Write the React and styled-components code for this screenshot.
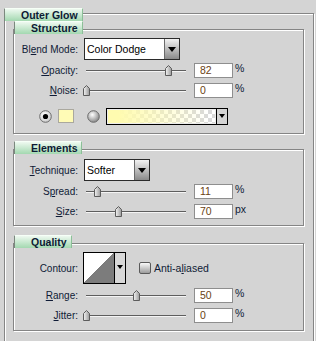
import React from 'react';
import styled, { createGlobalStyle } from 'styled-components';

const GlobalStyle = createGlobalStyle`
  html, body {
    margin: 0;
    padding: 0;
    overflow: hidden;
    background: #d4d4d4;
  }
  body {
    font-family: "Liberation Sans", Arial, sans-serif;
    font-size: 10px;
    color: #0f1b36;
  }
`;

const Page = styled.div`
  width: 316px;
  height: 341px;
  box-sizing: border-box;
  padding: 8px 0 0 4px;
  overflow: hidden;
`;

const Group = styled.section`
  display: flex;
  flex-direction: column;
  margin-top: ${({ $gap }) => $gap || 0}px;
`;

const Tab = styled.div`
  position: relative;
  z-index: 1;
  align-self: flex-start;
  box-sizing: border-box;
  width: ${({ $w }) => $w}px;
  height: 13px;
  margin-left: ${({ $indent }) => $indent || 0}px;
  margin-bottom: ${({ $overlap }) => $overlap}px;
  padding-left: 16px;
  font-size: 10.5px;
  font-weight: bold;
  line-height: 12px;
  color: #0c1a34;
  background: linear-gradient(#eef9f0, #a3d8b0);
  border-top: 1px solid #f6fff7;
  border-left: 1px solid #7b887e;
  border-right: 1px solid #8cbf98;
`;

const Frame = styled.div`
  box-sizing: border-box;
  width: ${({ $w }) => $w}px;
  height: ${({ $h }) => $h}px;
  padding: ${({ $pad }) => $pad};
  border: 1px solid #858585;
  box-shadow: 1px 1px 0 #fff, inset 1px 1px 0 #fff;
`;

const Row = styled.div`
  display: flex;
  align-items: center;
  height: ${({ $h }) => $h}px;
  margin-top: ${({ $mt }) => $mt || 0}px;
`;

const Label = styled.label`
  width: 64px;
  margin-right: 6px;
  text-align: right;
  white-space: nowrap;
  flex-shrink: 0;
`;

const Key = styled.span`
  text-decoration: underline;
`;

const Select = styled.div`
  display: flex;
  box-sizing: border-box;
  width: ${({ $w }) => $w}px;
  height: 22px;
  background: #fff;
  border: 1px solid #2b2b2b;
`;

const SelectText = styled.span`
  flex: 1;
  padding-left: 2px;
  font-size: 10.5px;
  line-height: 20px;
  color: #000;
`;

const SelectButton = styled.div`
  display: flex;
  align-items: center;
  justify-content: center;
  width: 14px;
  background: linear-gradient(#f2f2f2, #8a8a8a);
  border-left: 1px solid #6a6a6a;
`;

const Arrow = styled.span`
  width: 0;
  height: 0;
  border-left: ${({ $s }) => $s}px solid transparent;
  border-right: ${({ $s }) => $s}px solid transparent;
  border-top: ${({ $s }) => $s + 1}px solid #000;
`;

const Slider = styled.div`
  position: relative;
  width: 100px;
  height: 15px;
  margin-left: 2px;
  flex-shrink: 0;
`;

const Track = styled.div`
  margin-top: 7px;
  height: 0;
  border-top: 1px solid #5e5e5e;
  border-bottom: 1px solid #f4f4f4;
`;

const Thumb = styled.svg`
  position: absolute;
  top: 2px;
  left: calc(${({ $pos }) => $pos}% - 3px);
`;

const NumberBox = styled.div`
  box-sizing: border-box;
  width: 39px;
  height: 15px;
  margin-left: 8px;
  padding-left: 5px;
  background: #fff;
  border: 1px solid #8e8e8e;
  font-size: 10.5px;
  line-height: 13px;
  color: #6b3f12;
`;

const Unit = styled.span`
  align-self: flex-start;
  margin-left: 2px;
  margin-top: -1px;
  font-size: 10.5px;
  line-height: 12px;
`;

const ColorRow = styled(Row)`
  padding-left: 25px;
`;

const Swatch = styled.div`
  box-sizing: border-box;
  width: 16px;
  height: 14px;
  margin: 0 13px 0 6px;
  background: #fffbb6;
  border: 1px solid #aaa89e;
`;

const GradientBox = styled.div`
  display: flex;
  box-sizing: border-box;
  width: 122px;
  height: 17px;
  margin-left: 6px;
  border: 1px solid #000;
`;

const GradientFill = styled.div`
  flex: 1;
  border: 1px solid #ececec;
  background-color: #fff;
  background-image: linear-gradient(to right, #fffbb0 10%, rgba(255, 251, 176, 0) 95%),
    linear-gradient(45deg, #d9d9d9 25%, transparent 25%, transparent 75%, #d9d9d9 75%),
    linear-gradient(45deg, #d9d9d9 25%, transparent 25%, transparent 75%, #d9d9d9 75%);
  background-size: 100% 100%, 8px 8px, 8px 8px;
  background-position: 0 0, 0 0, 4px 4px;
`;

const GradientButton = styled.div`
  display: flex;
  align-items: center;
  justify-content: center;
  width: 10px;
  background: #d4d4d4;
  border-left: 1px solid #000;
`;

const ContourBox = styled.div`
  display: flex;
  box-sizing: border-box;
  width: 43px;
  height: 32px;
  margin-left: -1px;
  border: 1px solid #000;
`;

const ContourCurve = styled.div`
  width: 30px;
  background: linear-gradient(to top left, #7c7c7c 50%, #fff 50%);
`;

const ContourButton = styled.div`
  display: flex;
  justify-content: center;
  flex: 1;
  padding-top: 12px;
  box-sizing: border-box;
  background: #d8d8d8;
  border-left: 1px solid #000;
`;

const Checkbox = styled.div`
  box-sizing: border-box;
  width: 12px;
  height: 12px;
  margin: 0 3px 0 13px;
  border: 1px solid #5a5a5a;
  border-radius: 2px;
  background: linear-gradient(#fafafa, #9c9c9c);
`;

const CheckLabel = styled.span`
  font-size: 10.5px;
`;

const Radio = ({ checked }) => (
  <svg width="13" height="13" viewBox="0 0 13 13">
    <defs>
      <radialGradient id={checked ? 'rOn' : 'rOff'} cx="40%" cy="35%" r="70%">
        <stop offset="0" stopColor="#ffffff" />
        <stop offset="1" stopColor={checked ? '#c8c8c8' : '#808080'} />
      </radialGradient>
    </defs>
    <circle cx="6.5" cy="6.5" r="5.8" fill={`url(#${checked ? 'rOn' : 'rOff'})`} stroke="#6c6c6c" />
    {checked && <circle cx="6.5" cy="6.5" r="2.6" fill="#000" />}
  </svg>
);

const SliderRow = ({ label, value, pos, unit, mt }) => (
  <Row $h={15} $mt={mt}>
    <Label>{label}</Label>
    <Slider>
      <Track />
      <Thumb $pos={pos} width="7" height="11" viewBox="0 0 7 11">
        <defs>
          <linearGradient id="thumbFill" x1="0" y1="0" x2="1" y2="0">
            <stop offset="0" stopColor="#f4f4f4" />
            <stop offset="1" stopColor="#9a9a9a" />
          </linearGradient>
        </defs>
        <path d="M0.5 3.5 L3.5 0.5 L6.5 3.5 V10.5 H0.5 Z" fill="url(#thumbFill)" stroke="#5c5c5c" />
      </Thumb>
    </Slider>
    <NumberBox>{value}</NumberBox>
    <Unit>{unit}</Unit>
  </Row>
);

const Dropdown = ({ value, width }) => (
  <Select $w={width}>
    <SelectText>{value}</SelectText>
    <SelectButton>
      <Arrow $s={4} />
    </SelectButton>
  </Select>
);

export default function App() {
  return (
    <Page>
      <GlobalStyle />
      <Group>
        <Tab $w={79} $overlap={-8}>Outer Glow</Tab>
        <Frame $w={310} $h={340} $pad="7px 0 0 8px">
          <Group>
            <Tab $w={69} $indent={1} $overlap={-5}>Structure</Tab>
            <Frame $w={291} $h={105} $pad="8px 0 0 0">
              <Row $h={22}>
                <Label>Bl<Key>e</Key>nd Mode:</Label>
                <Dropdown value="Color Dodge" width={96} />
              </Row>
              <SliderRow label={<><Key>O</Key>pacity:</>} value="82" pos={82} unit="%" mt={3} />
              <SliderRow label={<><Key>N</Key>oise:</>} value="0" pos={0} unit="%" mt={5} />
              <ColorRow $h={16} $mt={10}>
                <Radio checked />
                <Swatch />
                <Radio />
                <GradientBox>
                  <GradientFill />
                  <GradientButton>
                    <Arrow $s={3} />
                  </GradientButton>
                </GradientBox>
              </ColorRow>
            </Frame>
          </Group>

          <Group $gap={7}>
            <Tab $w={68} $indent={1} $overlap={-5}>Elements</Tab>
            <Frame $w={291} $h={77} $pad="9px 0 0 0">
              <Row $h={22}>
                <Label><Key>T</Key>echnique:</Label>
                <Dropdown value="Softer" width={66} />
              </Row>
              <SliderRow label={<>S<Key>p</Key>read:</>} value="11" pos={11} unit="%" mt={3} />
              <SliderRow label={<><Key>S</Key>ize:</>} value="70" pos={32} unit="px" mt={5} />
            </Frame>
          </Group>

          <Group $gap={9}>
            <Tab $w={58} $indent={1} $overlap={-5}>Quality</Tab>
            <Frame $w={291} $h={88} $pad="8px 0 0 0">
              <Row $h={32}>
                <Label>Contour:</Label>
                <ContourBox>
                  <ContourCurve />
                  <ContourButton>
                    <Arrow $s={3} />
                  </ContourButton>
                </ContourBox>
                <Checkbox />
                <CheckLabel>Anti-a<Key>l</Key>iased</CheckLabel>
              </Row>
              <SliderRow label={<><Key>R</Key>ange:</>} value="50" pos={50} unit="%" mt={4} />
              <SliderRow label={<><Key>J</Key>itter:</>} value="0" pos={0} unit="%" mt={5} />
            </Frame>
          </Group>
        </Frame>
      </Group>
    </Page>
  );
}
